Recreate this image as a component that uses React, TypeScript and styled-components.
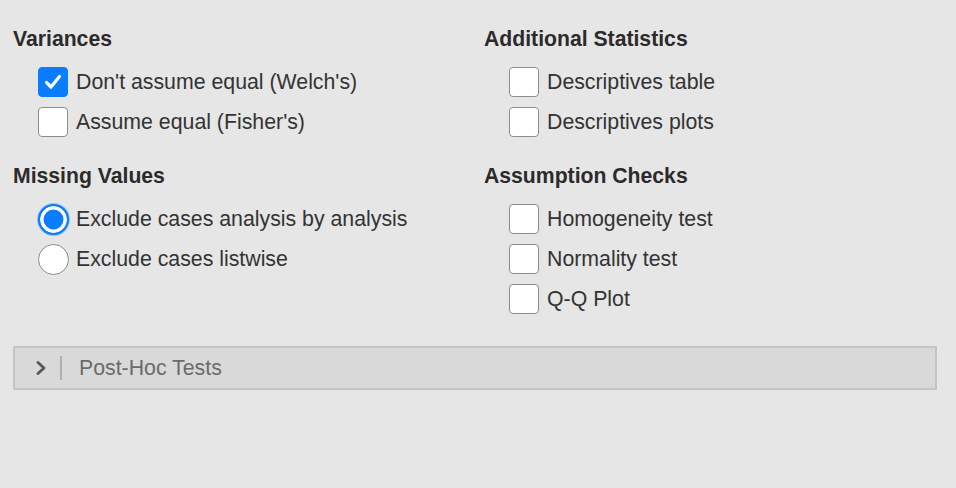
import React from "react";
import styled, { createGlobalStyle } from "styled-components";

const Global = createGlobalStyle`
  html, body { margin: 0; padding: 0; background: #e6e6e6; }
  body { font-family: "Liberation Sans", Arial, sans-serif; }
`;

const Page = styled.div`
  width: 956px;
  height: 488px;
  box-sizing: border-box;
  padding: 26px 19px 0 13px;
  background: #e6e6e6;
`;

const Columns = styled.div`
  display: grid;
  grid-template-columns: 471px 1fr;
`;

const Column = styled.div`
  display: flex;
  flex-direction: column;
`;

const Group = styled.div<{ $gap?: number }>`
  display: flex;
  flex-direction: column;
  margin-bottom: ${(p) => p.$gap ?? 21}px;
`;

const Title = styled.div`
  font-size: 21.2px;
  font-weight: bold;
  color: #2b2b2b;
  line-height: 25px;
  height: 24px;
  margin-bottom: 12px;
`;

const Row = styled.label`
  display: flex;
  align-items: center;
  height: 40px;
  padding-left: 25px;
  gap: 8px;
  font-size: 21.3px;
  line-height: 26px;
  color: #333;
`;

const Box = styled.span<{ $checked?: boolean }>`
  width: 30px;
  height: 30px;
  box-sizing: border-box;
  border-radius: 4px;
  border: 1.5px solid ${(p) => (p.$checked ? "#0a7cff" : "#8c8c8c")};
  background: ${(p) => (p.$checked ? "#0a7cff" : "#ffffff")};
  display: flex;
  align-items: center;
  justify-content: center;
  flex-shrink: 0;
`;

const Radio = styled.span<{ $checked?: boolean }>`
  width: 31px;
  height: 31px;
  margin-right: -1px;
  box-sizing: border-box;
  border-radius: 50%;
  border: ${(p) => (p.$checked ? "2px solid #0a7cff" : "1.5px solid #8c8c8c")};
  background: ${(p) => (p.$checked ? "#0a7cff" : "#ffffff")};
  box-shadow: ${(p) => (p.$checked ? "inset 0 0 0 3.5px #ffffff, 0 0 0 1px rgba(10,124,255,0.35)" : "none")};
  flex-shrink: 0;
`;

const Panel = styled.div`
  margin-top: 27px;
  height: 44px;
  box-sizing: border-box;
  border: 2px solid #c4c4c4;
  background: #d9d9d9;
  display: flex;
  align-items: center;
  padding-left: 18px;
`;

const Chevron = styled.span`
  width: 16px;
  display: flex;
  align-items: center;
  justify-content: center;
`;

const Divider = styled.span`
  width: 2px;
  height: 24px;
  background: #b0b0b0;
  margin: 0 17px 0 11px;
`;

const PanelLabel = styled.span`
  font-size: 21.3px;
  color: #6b6b6b;
`;

const Check = () => (
  <svg width="20" height="20" viewBox="0 0 20 20">
    <path d="M3.5 10.5 L8 15 L16.5 4.5" fill="none" stroke="#fff" strokeWidth="3.2" strokeLinecap="round" strokeLinejoin="round" />
  </svg>
);

const CheckRow = ({ label, checked }: { label: string; checked?: boolean }) => (
  <Row>
    <Box $checked={checked}>{checked && <Check />}</Box>
    {label}
  </Row>
);

const RadioRow = ({ label, checked }: { label: string; checked?: boolean }) => (
  <Row>
    <Radio $checked={checked} />
    {label}
  </Row>
);

export default function App() {
  return (
    <>
      <Global />
      <Page>
        <Columns>
          <Column>
            <Group>
              <Title>Variances</Title>
              <CheckRow label="Don't assume equal (Welch's)" checked />
              <CheckRow label="Assume equal (Fisher's)" />
            </Group>
            <Group>
              <Title>Missing Values</Title>
              <RadioRow label="Exclude cases analysis by analysis" checked />
              <RadioRow label="Exclude cases listwise" />
            </Group>
          </Column>
          <Column>
            <Group>
              <Title>Additional Statistics</Title>
              <CheckRow label="Descriptives table" />
              <CheckRow label="Descriptives plots" />
            </Group>
            <Group $gap={0}>
              <Title>Assumption Checks</Title>
              <CheckRow label="Homogeneity test" />
              <CheckRow label="Normality test" />
              <CheckRow label="Q-Q Plot" />
            </Group>
          </Column>
        </Columns>
        <Panel>
          <Chevron>
            <svg width="12" height="16" viewBox="0 0 12 16">
              <path d="M3 2.5 L9 8 L3 13.5" fill="none" stroke="#555" strokeWidth="2.8" strokeLinecap="round" strokeLinejoin="round" />
            </svg>
          </Chevron>
          <Divider />
          <PanelLabel>Post-Hoc Tests</PanelLabel>
        </Panel>
      </Page>
    </>
  );
}
